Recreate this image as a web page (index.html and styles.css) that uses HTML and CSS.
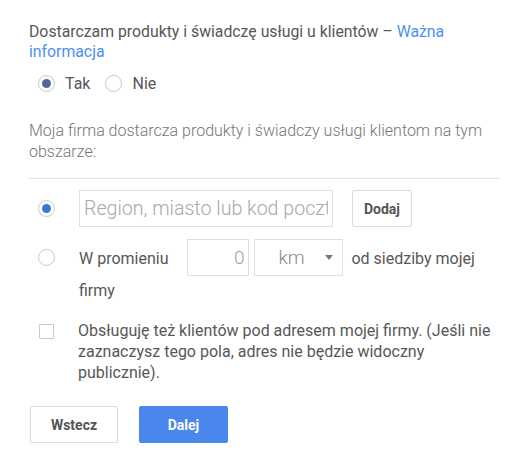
FILE: index.html
```html
<!DOCTYPE html>
<html lang="pl">
<head>
  <meta charset="UTF-8">
  <meta name="viewport" content="width=device-width, initial-scale=1.0">
  <title>Obszar obsługi</title>
  <link rel="stylesheet" href="styles.css">
</head>
<body>

<section class="panel">
  <p class="intro">Dostarczam produkty i świadczę usługi u klientów – <a href="#">Ważna informacja</a></p>

  <div class="choice">
    <label class="choice-item"><input type="radio" name="deliver" class="radio" checked> Tak</label>
    <label class="choice-item"><input type="radio" name="deliver" class="radio"> Nie</label>
  </div>

  <p class="hint">Moja firma dostarcza produkty i świadczy usługi klientom na tym obszarze:</p>

  <hr class="sep">

  <!-- obszar: region -->
  <div class="opt opt-region">
    <input type="radio" name="area" class="radio radio-blue" checked>
    <div class="opt-body">
      <input type="text" class="field field-region" placeholder="Region, miasto lub kod pocztowy">
      <button class="btn btn-small">Dodaj</button>
    </div>
  </div>

  <!-- obszar: promien -->
  <div class="opt opt-radius">
    <input type="radio" name="area" class="radio">
    <p class="opt-body opt-text">W promieniu <input type="text" class="field field-num" value="0"><span class="field field-select">km<span class="caret"></span></span> od siedziby mojej firmy</p>
  </div>

  <div class="opt opt-check">
    <input type="checkbox" class="check">
    <p class="opt-body opt-text">Obsługuję też klientów pod adresem mojej firmy. (Jeśli nie zaznaczysz tego pola, adres nie będzie widoczny publicznie).</p>
  </div>

  <div class="actions">
    <button class="btn btn-back">Wstecz</button>
    <button class="btn btn-next">Dalej</button>
  </div>
</section>

</body>
</html>
```

FILE: styles.css
```css
body {
  font-family: Roboto, "Liberation Sans", sans-serif;
  margin: 0;
  padding: 0;
  background-color: #fff;
  color: #575757;
  font-size: 16px;
}

.panel {
  width: 471px;
  padding: 22px 0 0 29px;
}

p {
  margin: 0;
}

.intro {
  font-size: 15.8px;
  line-height: 20px;
}

.intro a {
  color: #4d8ff5;
  text-decoration: none;
}

/* Tak / Nie */
.choice {
  display: flex;
  align-items: center;
  gap: 15px;
  margin-top: 11px;
  padding-left: 9px;
  height: 20px;
}

.choice-item {
  display: flex;
  align-items: center;
  gap: 10px;
}

.radio {
  appearance: none;
  -webkit-appearance: none;
  width: 17px;
  height: 17px;
  margin: 0;
  border: 1px solid #c8c8c8;
  border-radius: 50%;
  background-color: #fff;
  position: relative;
  flex-shrink: 0;
}

.radio:checked::after {
  content: "";
  position: absolute;
  left: 3px;
  top: 3px;
  width: 9px;
  height: 9px;
  border-radius: 50%;
  background-color: #51699a;
}

.radio-blue:checked::after {
  background-color: #3d74d6;
}

.hint {
  margin-top: 27px;
  line-height: 21px;
  color: #757575;
  font-weight: 300;
}

.sep {
  border: 0;
  border-top: 1px solid #e2e2e2;
  margin: 16px 0 0 0;
}

/* opcje obszaru */
.opt {
  display: flex;
  align-items: flex-start;
  padding-left: 9px;
}

.opt .radio,
.opt .check {
  margin-right: 24px;
}

.opt-region {
  margin-top: 11px;
  align-items: center;
}

.opt-body {
  display: flex;
  align-items: center;
  gap: 19px;
}

.field {
  box-sizing: border-box;
  height: 37px;
  border: 1px solid #e0e0e0;
  font-family: inherit;
  font-weight: 300;
  font-size: 19px;
  color: #999;
  background-color: #fff;
  margin: 0;
}

.field-region {
  width: 254px;
  padding: 0 4px;
  font-size: 19.6px;
}

.field-region::placeholder {
  color: #a8a8a8;
}

.btn {
  font-family: inherit;
  font-weight: bold;
  font-size: 14px;
  color: #555;
  background-color: #fff;
  border: 1px solid #dcdcdc;
  border-radius: 2px;
  cursor: pointer;
}

.btn-small {
  height: 37px;
  width: 60px;
}

.opt-radius {
  margin-top: 12px;
}

.opt-radius .radio {
  margin-top: 10px;
}

.opt-text {
  display: block;
  line-height: 21px;
  width: 421px;
}

.opt-radius .opt-text {
  line-height: 22px;
}

.field-num {
  display: inline-block;
  vertical-align: middle;
  width: 62px;
  margin: 0 2px 4px 15px;
  padding: 0 4px;
  text-align: right;
  color: #a0a0a0;
}

.field-select {
  display: inline-block;
  vertical-align: middle;
  width: 89px;
  margin: 0 4px 4px 3px;
  padding-left: 23px;
  line-height: 35px;
  color: #8a8a8a;
  position: relative;
}

.caret {
  position: absolute;
  right: 9px;
  top: 15px;
  border-left: 4px solid transparent;
  border-right: 4px solid transparent;
  border-top: 5px solid #777;
}

.opt-check {
  margin-top: 18px;
}

.check {
  appearance: none;
  -webkit-appearance: none;
  width: 15px;
  height: 15px;
  margin: 4px 0 0 1px;
  border: 1px solid #c8c8c8;
  border-radius: 1px;
  background-color: #fff;
  flex-shrink: 0;
}

.opt-check .check {
  margin-right: 24px;
}

/* przyciski */
.actions {
  display: flex;
  gap: 21px;
  margin-top: 23px;
}

.btn-back {
  width: 88px;
  height: 37px;
  margin-left: 1px;
  box-shadow: 0 1px 1px rgba(0, 0, 0, 0.08);
}

.btn-next {
  width: 89px;
  height: 37px;
  background-color: #4a87ec;
  border-color: #4a87ec;
  color: #fff;
}
```
